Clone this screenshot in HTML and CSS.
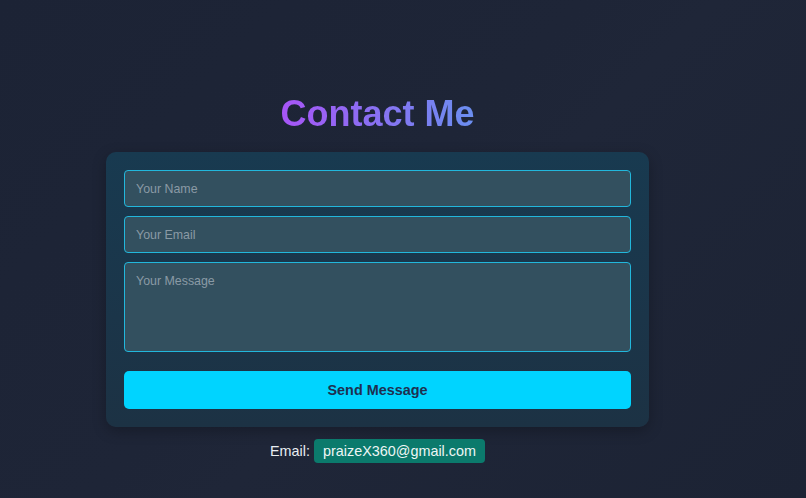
FILE: index.html
```html
<!DOCTYPE html>
<html lang="en">
<head>
<meta charset="utf-8">
<title>Contact Me</title>
<link rel="stylesheet" href="styles.css">
</head>
<body>
<main class="contact">
  <h1 class="title">Contact Me</h1>
  <form class="card">
    <input class="field" type="text" placeholder="Your Name">
    <input class="field" type="email" placeholder="Your Email">
    <textarea class="field area" placeholder="Your Message"></textarea>
    <button class="send" type="button">Send Message</button>
  </form>
  <p class="email-line">Email: <span class="badge">praizeX360@gmail.com</span></p>
</main>
</body>
</html>
```
FILE: styles.css
```css
html, body {
  margin: 0;
  height: 100%;
}
body {
  background: linear-gradient(135deg, #1c2335 0%, #1e2537 45%, #1f2638 55%, #1c2334 100%);
  font-family: "Liberation Sans", Arial, sans-serif;
  overflow: hidden;
}
.contact {
  width: 543px;
  margin-left: 106px;
  padding-top: 93px;
  display: flex;
  flex-direction: column;
  align-items: stretch;
}
.title {
  margin: 0 auto 18px;
  width: max-content;
  text-align: center;
  font-size: 36px;
  line-height: 41px;
  font-weight: 700;
  background: linear-gradient(90deg, #a855f7 0%, #8b6ef2 45%, #6b8ff0 100%);
  -webkit-background-clip: text;
  background-clip: text;
  color: transparent;
}
.card {
  box-sizing: border-box;
  height: 275px;
  padding: 18px;
  border-radius: 10px;
  background: linear-gradient(180deg, #183a50 0%, #1b3549 60%, #1c3244 100%);
  box-shadow: 0 4px 14px rgba(0, 0, 0, 0.25);
  display: flex;
  flex-direction: column;
  gap: 9px;
}
.field {
  box-sizing: border-box;
  height: 37px;
  margin: 0;
  padding: 0 11px;
  border: 1px solid #22b7dc;
  border-radius: 4px;
  background: #33505f;
  color: #e5e7eb;
  font-family: "Liberation Sans", Arial, sans-serif;
  font-size: 12.4px;
  outline: none;
}
.field::placeholder {
  color: #8a9aa5;
}
.area {
  height: 90px;
  padding-top: 11px;
  resize: none;
}
.send {
  margin-top: 10px;
  height: 38px;
  border: none;
  border-radius: 5px;
  background: #00d4ff;
  color: #1e3050;
  font-family: "Liberation Sans", Arial, sans-serif;
  font-size: 14.4px;
  font-weight: 700;
}
.email-line {
  margin: 12px 0 0;
  text-align: center;
  color: #e8edf2;
  font-size: 14.4px;
  line-height: 24px;
}
.badge {
  display: inline-block;
  padding: 0 9px;
  height: 24px;
  line-height: 24px;
  border-radius: 4px;
  background: #0b7a6c;
  color: #eef6f5;
}
```
